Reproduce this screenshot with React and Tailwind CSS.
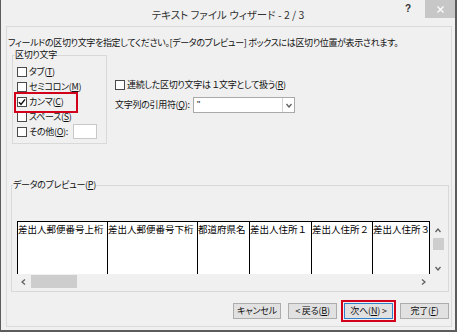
import React from "react";

const UI = "font-['Noto_Sans_CJK_JP',sans-serif] [font-feature-settings:'palt']";
const MONO = "font-['Noto_Sans_CJK_JP',sans-serif]";

function Check({ checked }) {
  return (
    <span className="w-[10px] h-[10px] border border-[#4a4a4a] bg-white flex items-center justify-center shrink-0">
      {checked && (
        <svg width="8" height="8" viewBox="0 0 8 8">
          <path d="M1 4.2 L3 6.4 L7 1.4" stroke="#111" strokeWidth="1.5" fill="none" />
        </svg>
      )}
    </span>
  );
}

function Chev({ dir }) {
  const paths = {
    left: "M4 0.5 L1 3 L4 5.5",
    right: "M1 0.5 L4 3 L1 5.5",
    up: "M0.5 4 L3 1 L5.5 4",
    down: "M0.5 1 L3 4 L5.5 1",
  };
  const horiz = dir === "left" || dir === "right";
  return (
    <svg width={horiz ? 5 : 6} height={horiz ? 6 : 5} viewBox={horiz ? "0 0 5 6" : "0 0 6 5"}>
      <path d={paths[dir]} stroke="#606060" strokeWidth="1.3" fill="none" />
    </svg>
  );
}

function Btn({ children, w, def }) {
  return (
    <div
      className={`relative ${w} h-[16px] flex items-center justify-center bg-[#e1e1e1] border ${
        def ? "border-[#2f7fc9]" : "border-[#adadad]"
      } text-[9px] leading-[12px] tracking-[-0.2px] text-[#111]`}
    >
      {children}
      {def && <span className="absolute -inset-[4px] border-2 border-[#d3001c]" />}
    </div>
  );
}

const cols = [
  ["差出人郵便番号上桁", "w-[90px]"],
  ["差出人郵便番号下桁", "w-[90px]"],
  ["都道府県名", "w-[52px]"],
  ["差出人住所１", "w-[62px]"],
  ["差出人住所２", "w-[61px]"],
  ["差出人住所３", "w-[57px]"],
];

export default function App() {
  return (
    <div className={`w-[460px] h-[333px] bg-white overflow-hidden ${UI}`}>
      <div className="w-[457px] h-[332px] bg-[#f0f0f0] border-l border-r-2 border-b-2 border-[#5c5c5c] flex flex-col">
        {/* title bar */}
        <div className="h-[26px] shrink-0 grid grid-cols-[1fr_auto_1fr]">
          <div />
          <div className="pt-[8px] text-[10.5px] leading-[14px] text-[#333] whitespace-nowrap">
            テキスト ファイル ウィザード - 2 / 3
          </div>
          <div className="flex justify-end items-start">
            <span className="mt-[3px] mr-[14px] text-[10px] leading-[12px] font-bold text-[#333] font-['Liberation_Sans',sans-serif]">?</span>
            <div className="w-[30px] h-[18px] bg-[#c7c7c7] flex items-center justify-center">
              <svg width="7" height="7" viewBox="0 0 7 7">
                <path d="M0.5 0.5 L6.5 6.5 M6.5 0.5 L0.5 6.5" stroke="#fff" strokeWidth="1.2" />
              </svg>
            </div>
          </div>
        </div>

        {/* client */}
        <div className="flex-1 ml-[5px] mr-[3px] mb-[3px] border border-[#dadada] flex flex-col text-[#111] tracking-[-0.3px]">
          <div className="mt-[10px] pl-[1px] text-[9px] leading-[12px] whitespace-nowrap tracking-[-0.35px]">
            フィールドの区切り文字を指定してください。[データのプレビュー] ボックスには区切り位置が表示されます。
          </div>

          <div className="flex items-start mt-[6px] ml-[5px]">
            {/* delimiter group */}
            <div className="w-[95px] h-[89px] border border-[#d9d9d9] flex flex-col">
              <span className="-mt-[7px] ml-[2px] w-fit bg-[#f0f0f0] text-[9px] leading-[12px]">区切り文字</span>
              <div className="mt-[3px] pl-[4px] flex flex-col text-[9px] leading-[12px]">
                <div className="h-[15px] flex items-center gap-[2px]">
                  <Check />
                  <span>タブ(<span className="underline">T</span>)</span>
                </div>
                <div className="h-[15px] flex items-center gap-[2px]">
                  <Check />
                  <span>セミコロン(<span className="underline">M</span>)</span>
                </div>
                <div className="relative h-[15px] flex items-center gap-[2px]">
                  <Check checked />
                  <span>カンマ(<span className="underline">C</span>)</span>
                  <span className="absolute left-[-3px] top-[-2px] w-[64px] h-[21px] border-2 border-[#d3001c]" />
                </div>
                <div className="h-[15px] flex items-center gap-[2px]">
                  <Check />
                  <span>スペース(<span className="underline">S</span>)</span>
                </div>
                <div className="h-[15px] flex items-center gap-[2px]">
                  <Check />
                  <span>その他(<span className="underline">O</span>):</span>
                  <span className="ml-[3px] w-[24px] h-[15px] bg-white border border-[#c8c8c8]" />
                </div>
              </div>
            </div>

            {/* right column */}
            <div className="ml-[8px] flex flex-col text-[9px] leading-[12px]">
              <div className="mt-[22px] h-[15px] flex items-center gap-[2px]">
                <Check />
                <span className="whitespace-nowrap">連続した区切り文字は １文字として扱う(<span className="underline">R</span>)</span>
              </div>
              <div className="mt-[5px] h-[16px] flex items-center">
                <span className="w-[78px] whitespace-nowrap">文字列の引用符(<span className="underline">Q</span>):</span>
                <div className="w-[102px] h-[16px] bg-white border border-[#a9a9a9] flex">
                  <span className="flex-1 pl-[3px] leading-[12px] text-[9px] font-['Liberation_Sans',sans-serif]">"</span>
                  <span className="w-[12px] border-l border-[#d4d4d4] flex items-center justify-center">
                    <Chev dir="down" />
                  </span>
                </div>
              </div>
            </div>
          </div>

          {/* preview group */}
          <div className="mt-[41px] ml-[4px] w-[438px] h-[107px] border border-[#d9d9d9] flex flex-col">
            <span className="-mt-[7px] ml-[1px] w-fit bg-[#f0f0f0] text-[9px] leading-[12px]">データのプレビュー(<span className="underline">P</span>)</span>
            <div className="mt-[30px] ml-[5px] w-[429px] h-[68px] grid grid-cols-[413px_16px] grid-rows-[53px_15px]">
              <div className={`flex bg-white border-l border-t border-black ${MONO} [font-feature-settings:normal] tracking-normal text-[9.5px] leading-[12px] text-black`}>
                {cols.map(([t, w]) => (
                  <div key={t} className={`${w} shrink-0 h-full border-r border-black overflow-hidden whitespace-nowrap pt-[1px]`}>
                    {t}
                  </div>
                ))}
              </div>
              <div className="flex flex-col items-center">
                <div className="mt-[7px]"><Chev dir="up" /></div>
                <div className="mt-[5px] w-[11px] h-[12px] bg-[#cdcdcd]" />
                <div className="mt-[16px]"><Chev dir="down" /></div>
              </div>
              <div className="flex items-center">
                <div className="w-[13px] flex justify-center"><Chev dir="left" /></div>
                <div className="ml-[1px] w-[46px] h-[13px] bg-[#cdcdcd]" />
                <div className="flex-1" />
                <div className="w-[13px] flex justify-center"><Chev dir="right" /></div>
              </div>
              <div />
            </div>
          </div>

          {/* buttons */}
          <div className="mt-[11px] mr-[2px] flex justify-end gap-[7px]">
            <Btn w="w-[48px]">キャンセル</Btn>
            <Btn w="w-[49px]">&lt; 戻る(<span className="underline">B</span>)</Btn>
            <Btn w="w-[49px]" def>次へ(<span className="underline">N</span>) &gt;</Btn>
            <Btn w="w-[49px]">完了(<span className="underline">F</span>)</Btn>
          </div>
        </div>
      </div>
    </div>
  );
}
